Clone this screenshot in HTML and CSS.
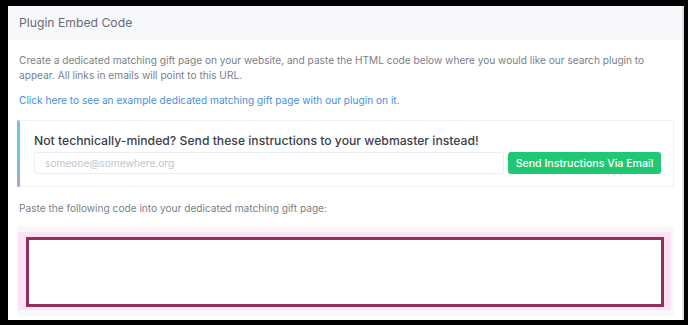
FILE: index.html
```html
<!DOCTYPE html>
<html lang="en">
<head>
    <meta charset="UTF-8">
    <meta name="viewport" content="width=device-width, initial-scale=1.0">
    <title>Plugin Embed Code</title>
    <link rel="stylesheet" href="styles.css">
</head>
<body>
    <div class="panel">
        <div class="panel-header">Plugin Embed Code</div>
        <div class="panel-body">
            <p class="text intro">
                Create a dedicated matching gift page on your website, and paste the HTML code below where you would like our search plugin to appear. All links in emails will point to this URL.
            </p>
            <p class="text"><a class="link" href="#">Click here to see an example dedicated matching gift page with our plugin on it.</a></p>

            <!-- webmaster callout -->
            <div class="callout">
                <div class="callout-bar"></div>
                <div class="callout-content">
                    <div class="callout-title">Not technically-minded? Send these instructions to your webmaster instead!</div>
                    <div class="send-row">
                        <input class="email-input" type="text" placeholder="someone@somewhere.org">
                        <button class="btn-send">Send Instructions Via Email</button>
                    </div>
                </div>
            </div>

            <p class="text paste">Paste the following code into your dedicated matching gift page:</p>

            <!-- code box -->
            <div class="code-wrap">
                <div class="code-glow">
                    <textarea class="code-area"></textarea>
                </div>
            </div>
        </div>
    </div>
</body>
</html>
```

FILE: styles.css
```css
body {
    margin: 0;
    background-color: #000;
    font-family: Inter, "Noto Sans", sans-serif;
}
.panel {
    margin: 6px 0 0 8px;
    width: 674px;
    height: 314px;
    background-color: #fff;
    border-right: 2px solid #dcdee3;
    overflow: hidden;
}
.panel-header {
    height: 34px;
    line-height: 34px;
    padding-left: 11px;
    background-color: #f7f8fc;
    color: #686c76;
    font-size: 12.2px;
}
.panel-body {
    padding: 0 8px 0 9px;
}
.text {
    margin: 0;
    padding: 0 2px;
    font-size: 10.15px;
    line-height: 15px;
    color: #7b7f88;
}
.intro {
    padding-top: 13px;
    margin-bottom: 10px;
}
.link {
    color: #4b8fdb;
    text-decoration: none;
}

/* callout */
.callout {
    display: flex;
    margin-top: 12px;
    height: 67px;
}
.callout-bar {
    width: 3px;
    background: linear-gradient(to bottom, #6ec6da 55%, #a9a3d8);
    border-radius: 2px;
}
.callout-content {
    flex: 1;
    padding: 12px 12px 0 14px;
    border: 1px solid #f0f1f4;
    border-left: none;
}
.callout-title {
    font-size: 12.2px;
    font-weight: 500;
    line-height: 18px;
    color: #3d4049;
    margin-top: -1px;
}
.send-row {
    display: flex;
    gap: 4px;
    margin-top: 2px;
}
.email-input {
    flex: 1;
    height: 22px;
    box-sizing: border-box;
    margin: 0;
    border: 1px solid #eceef2;
    border-radius: 2px;
    padding: 0 10px;
    font-family: Inter, "Noto Sans", sans-serif;
    font-size: 10.2px;
    outline: none;
}
.email-input::placeholder {
    color: #c3c6cc;
}
.btn-send {
    width: 153px;
    height: 22px;
    margin: 0;
    border: none;
    border-radius: 3px;
    background-color: #20c874;
    color: #fff;
    font-family: Inter, "Noto Sans", sans-serif;
    font-size: 10.6px;
    font-weight: 500;
    padding: 0;
}

.paste {
    margin-top: 14px;
}

/* code box */
.code-wrap {
    margin-top: 10px;
    padding: 6px 3px 6px 1px;
    background-color: #f7f8fa;
    border-radius: 4px;
}
.code-glow {
    padding: 5px 7px 3px 8px;
    background-color: #fde3f5;
}
.code-area {
    display: block;
    width: 100%;
    height: 70px;
    margin: 0;
    box-sizing: border-box;
    border: 3px solid #932f58;
    background-color: #fff;
    resize: none;
    outline: none;
}
```
